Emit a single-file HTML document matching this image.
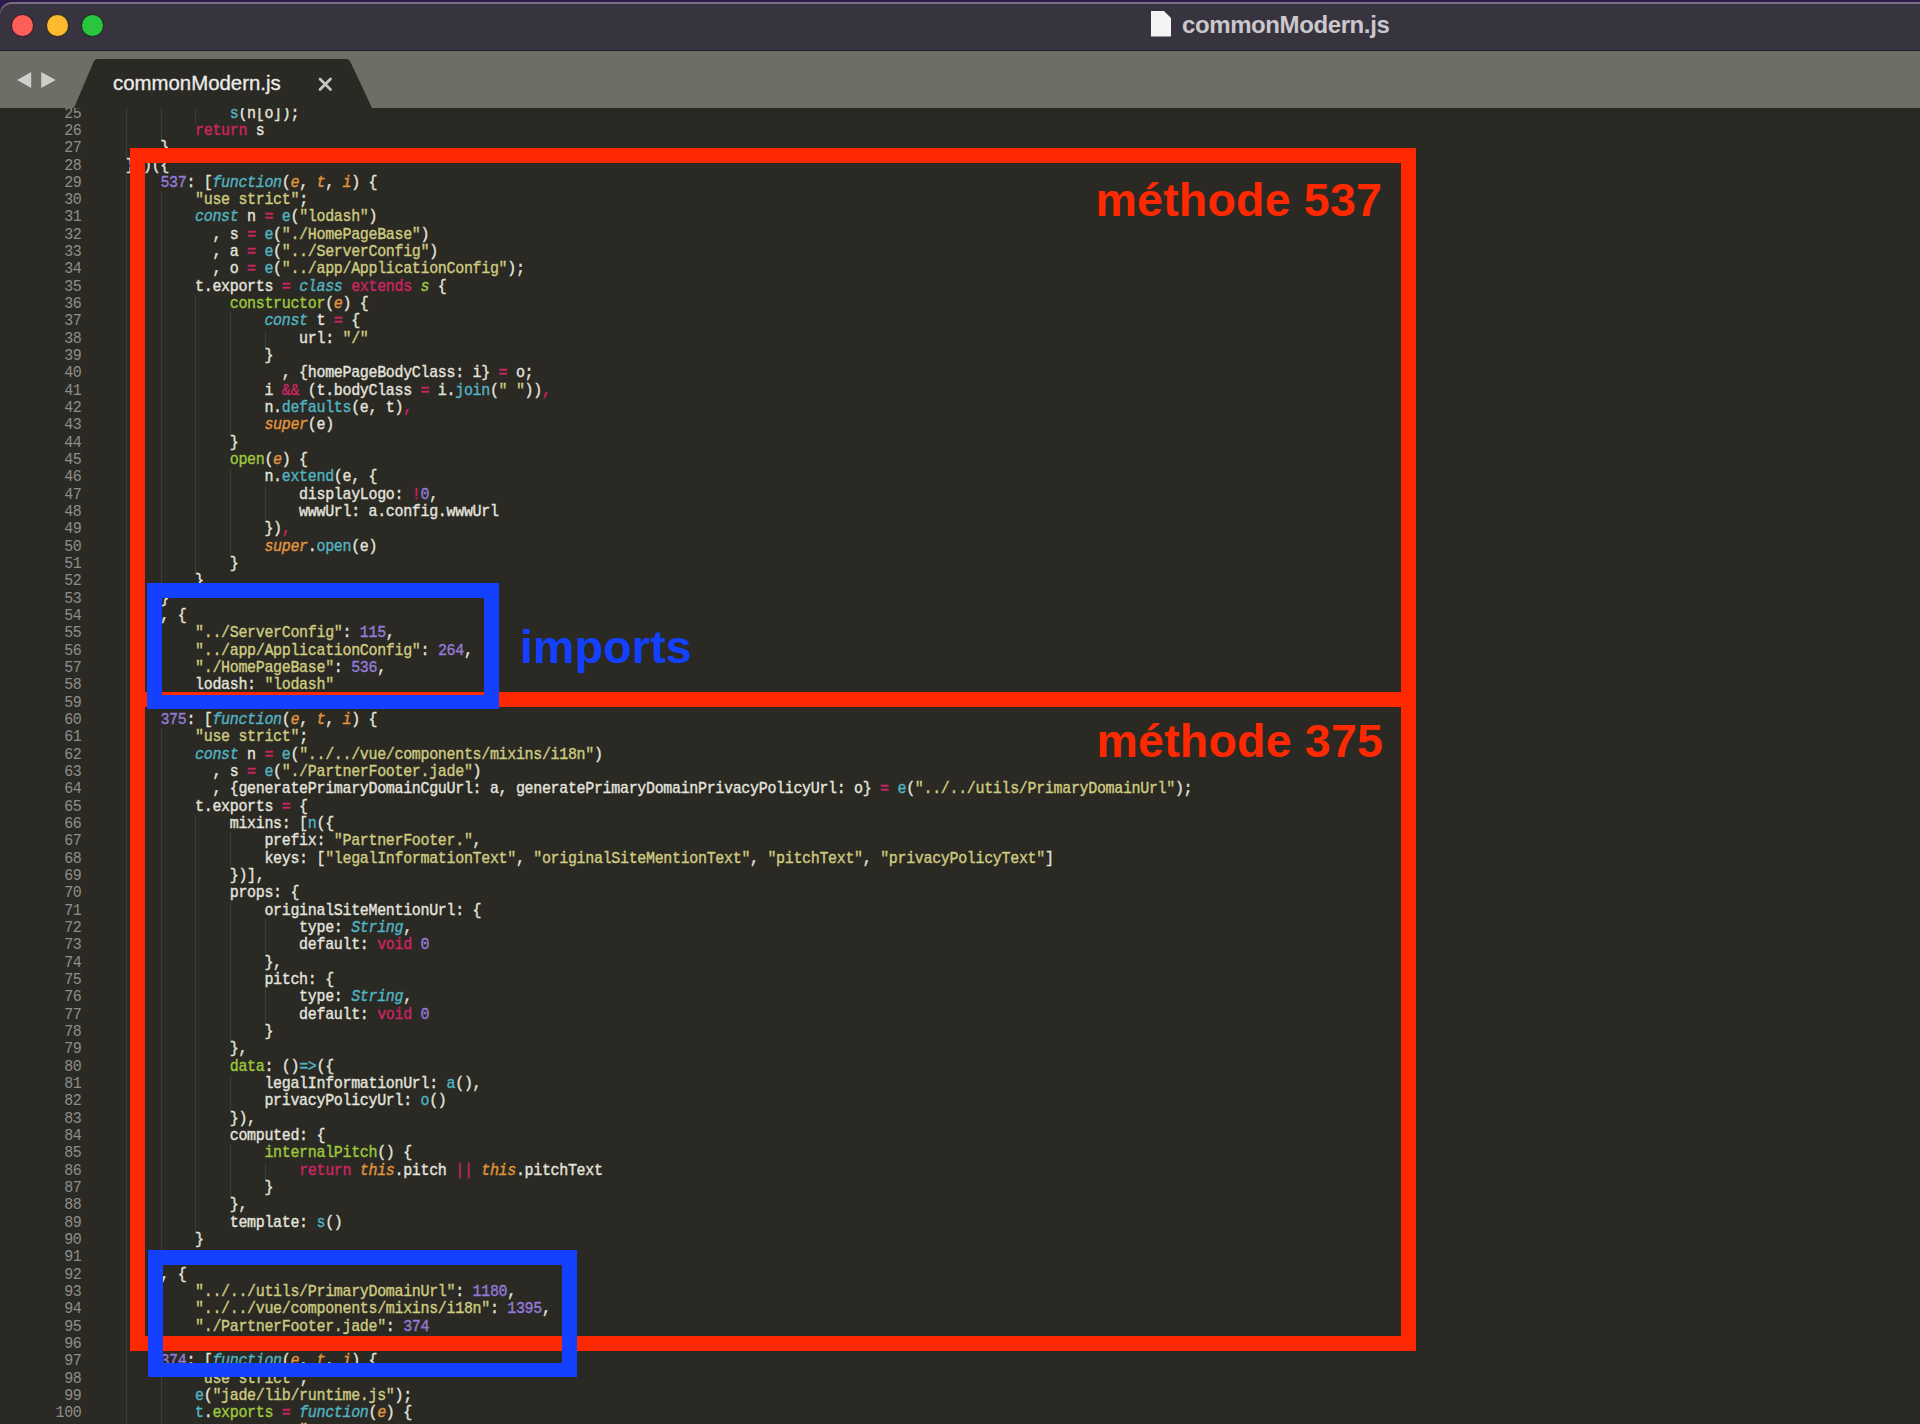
<!DOCTYPE html>
<html>
<head>
<meta charset="utf-8">
<style>
html,body{margin:0;padding:0}
body{width:1920px;height:1424px;overflow:hidden;position:relative;background:#2a2924;font-family:"Liberation Sans",sans-serif}
.abs{position:absolute}
#outer{left:0;top:0;width:1920px;height:40px;background:#2a1b4a}
#titlebar{left:0;top:2px;width:1920px;height:48px;background:#37333f;border-top-left-radius:12px;box-shadow:inset 0 2px 0 #7b6d82}
#tline{left:0;top:50px;width:1920px;height:1px;background:#211e25}
#tabbar{left:0;top:51px;width:1920px;height:57px;background:#6e6d66}
#editor{left:0;top:108px;width:1920px;height:1316px;background:#2a2924}
#title{left:1182px;top:0;font-weight:bold;font-size:24px;letter-spacing:-0.4px;color:#cac8cc;line-height:1}
#tabtext{left:113px;top:0;font-size:20.4px;color:#ececea;line-height:1;-webkit-text-stroke:0.3px #ececea}
.dot{width:21px;height:21px;border-radius:50%;top:14.5px}
#code{left:0;top:0;width:1920px;height:1424px;overflow:hidden;z-index:1}
.ln{position:absolute;left:125.7px;height:17.33px;line-height:17.33px;white-space:pre;font-family:"Liberation Mono",monospace;font-size:15px;letter-spacing:-0.330px;color:#e4e4df;-webkit-text-stroke:0.35px currentColor;
background-image:repeating-linear-gradient(to right,#3d3d37 0,#3d3d37 1px,transparent 1px,transparent 34.68px);background-repeat:no-repeat;transform:scaleY(1.08)}
.nm{position:absolute;left:20px;width:61.5px;text-align:right;height:17.33px;line-height:17.33px;font-family:"Liberation Mono",monospace;font-size:15px;letter-spacing:-0.330px;color:#8e8e88;transform:scaleY(1.08)}
i{font-style:normal}
i.k{color:#cc2462}
i.s{color:#cfcb80}
i.n{color:#947ad6}
i.f{color:#52b3c2}
i.t{color:#52b3c2;font-style:italic}
i.g{color:#9dc83c}
i.gi{color:#9dc83c;font-style:italic}
i.p{color:#e0963c;font-style:italic}
#ui{left:0;top:0;width:1920px;height:108px;z-index:2}
#ann{left:0;top:0;width:1920px;height:1424px;z-index:3}
.lbl{font-weight:bold;font-size:46.5px;letter-spacing:0.2px;line-height:1;white-space:nowrap}
</style>
</head>
<body>
<div id="code" class="abs">
<div class="nm" style="top:105.50px">25</div>
<div class="nm" style="top:122.84px">26</div>
<div class="nm" style="top:140.16px">27</div>
<div class="nm" style="top:157.50px">28</div>
<div class="nm" style="top:174.83px">29</div>
<div class="nm" style="top:192.16px">30</div>
<div class="nm" style="top:209.48px">31</div>
<div class="nm" style="top:226.81px">32</div>
<div class="nm" style="top:244.15px">33</div>
<div class="nm" style="top:261.47px">34</div>
<div class="nm" style="top:278.80px">35</div>
<div class="nm" style="top:296.13px">36</div>
<div class="nm" style="top:313.46px">37</div>
<div class="nm" style="top:330.79px">38</div>
<div class="nm" style="top:348.12px">39</div>
<div class="nm" style="top:365.45px">40</div>
<div class="nm" style="top:382.78px">41</div>
<div class="nm" style="top:400.11px">42</div>
<div class="nm" style="top:417.44px">43</div>
<div class="nm" style="top:434.77px">44</div>
<div class="nm" style="top:452.10px">45</div>
<div class="nm" style="top:469.43px">46</div>
<div class="nm" style="top:486.76px">47</div>
<div class="nm" style="top:504.09px">48</div>
<div class="nm" style="top:521.42px">49</div>
<div class="nm" style="top:538.75px">50</div>
<div class="nm" style="top:556.09px">51</div>
<div class="nm" style="top:573.41px">52</div>
<div class="nm" style="top:590.75px">53</div>
<div class="nm" style="top:608.08px">54</div>
<div class="nm" style="top:625.40px">55</div>
<div class="nm" style="top:642.74px">56</div>
<div class="nm" style="top:660.06px">57</div>
<div class="nm" style="top:677.39px">58</div>
<div class="nm" style="top:694.73px">59</div>
<div class="nm" style="top:712.05px">60</div>
<div class="nm" style="top:729.38px">61</div>
<div class="nm" style="top:746.71px">62</div>
<div class="nm" style="top:764.04px">63</div>
<div class="nm" style="top:781.38px">64</div>
<div class="nm" style="top:798.70px">65</div>
<div class="nm" style="top:816.03px">66</div>
<div class="nm" style="top:833.37px">67</div>
<div class="nm" style="top:850.69px">68</div>
<div class="nm" style="top:868.02px">69</div>
<div class="nm" style="top:885.36px">70</div>
<div class="nm" style="top:902.68px">71</div>
<div class="nm" style="top:920.01px">72</div>
<div class="nm" style="top:937.34px">73</div>
<div class="nm" style="top:954.67px">74</div>
<div class="nm" style="top:972.00px">75</div>
<div class="nm" style="top:989.33px">76</div>
<div class="nm" style="top:1006.66px">77</div>
<div class="nm" style="top:1023.99px">78</div>
<div class="nm" style="top:1041.32px">79</div>
<div class="nm" style="top:1058.65px">80</div>
<div class="nm" style="top:1075.98px">81</div>
<div class="nm" style="top:1093.32px">82</div>
<div class="nm" style="top:1110.64px">83</div>
<div class="nm" style="top:1127.97px">84</div>
<div class="nm" style="top:1145.30px">85</div>
<div class="nm" style="top:1162.63px">86</div>
<div class="nm" style="top:1179.96px">87</div>
<div class="nm" style="top:1197.29px">88</div>
<div class="nm" style="top:1214.62px">89</div>
<div class="nm" style="top:1231.95px">90</div>
<div class="nm" style="top:1249.28px">91</div>
<div class="nm" style="top:1266.62px">92</div>
<div class="nm" style="top:1283.94px">93</div>
<div class="nm" style="top:1301.27px">94</div>
<div class="nm" style="top:1318.61px">95</div>
<div class="nm" style="top:1335.93px">96</div>
<div class="nm" style="top:1353.26px">97</div>
<div class="nm" style="top:1370.59px">98</div>
<div class="nm" style="top:1387.92px">99</div>
<div class="nm" style="top:1405.25px">100</div>
<div class="ln" style="top:105.50px;background-size:104.04px 100%">            <i class="f">s</i>(n[o]);</div>
<div class="ln" style="top:122.84px;background-size:69.36px 100%">        <i class="k">return</i> s</div>
<div class="ln" style="top:140.16px;background-size:34.68px 100%">    }</div>
<div class="ln" style="top:157.50px;background:none">}()({</div>
<div class="ln" style="top:174.83px;background-size:34.68px 100%">    <i class="n">537</i>: [<i class="t">function</i>(<i class="p">e</i>, <i class="p">t</i>, <i class="p">i</i>) {</div>
<div class="ln" style="top:192.16px;background-size:69.36px 100%">        <i class="s">"use strict"</i>;</div>
<div class="ln" style="top:209.48px;background-size:69.36px 100%">        <i class="t">const</i> n <i class="k">=</i> <i class="f">e</i>(<i class="s">"lodash"</i>)</div>
<div class="ln" style="top:226.81px;background-size:69.36px 100%">          , s <i class="k">=</i> <i class="f">e</i>(<i class="s">"./HomePageBase"</i>)</div>
<div class="ln" style="top:244.15px;background-size:69.36px 100%">          , a <i class="k">=</i> <i class="f">e</i>(<i class="s">"../ServerConfig"</i>)</div>
<div class="ln" style="top:261.47px;background-size:69.36px 100%">          , o <i class="k">=</i> <i class="f">e</i>(<i class="s">"../app/ApplicationConfig"</i>);</div>
<div class="ln" style="top:278.80px;background-size:69.36px 100%">        t.exports <i class="k">=</i> <i class="t">class</i> <i class="k">extends</i> <i class="gi">s</i> {</div>
<div class="ln" style="top:296.13px;background-size:104.04px 100%">            <i class="g">constructor</i>(<i class="p">e</i>) {</div>
<div class="ln" style="top:313.46px;background-size:138.72px 100%">                <i class="t">const</i> t <i class="k">=</i> {</div>
<div class="ln" style="top:330.79px;background-size:173.40px 100%">                    url: <i class="s">"/"</i></div>
<div class="ln" style="top:348.12px;background-size:138.72px 100%">                }</div>
<div class="ln" style="top:365.45px;background-size:138.72px 100%">                  , {homePageBodyClass: i} <i class="k">=</i> o;</div>
<div class="ln" style="top:382.78px;background-size:138.72px 100%">                i <i class="k">&amp;&amp;</i> (t.bodyClass <i class="k">=</i> i.<i class="f">join</i>(<i class="s">" "</i>))<i class="k">,</i></div>
<div class="ln" style="top:400.11px;background-size:138.72px 100%">                n.<i class="f">defaults</i>(e, t)<i class="k">,</i></div>
<div class="ln" style="top:417.44px;background-size:138.72px 100%">                <i class="p">super</i>(e)</div>
<div class="ln" style="top:434.77px;background-size:104.04px 100%">            }</div>
<div class="ln" style="top:452.10px;background-size:104.04px 100%">            <i class="g">open</i>(<i class="p">e</i>) {</div>
<div class="ln" style="top:469.43px;background-size:138.72px 100%">                n.<i class="f">extend</i>(e, {</div>
<div class="ln" style="top:486.76px;background-size:173.40px 100%">                    displayLogo: <i class="k">!</i><i class="n">0</i>,</div>
<div class="ln" style="top:504.09px;background-size:173.40px 100%">                    wwwUrl: a.config.wwwUrl</div>
<div class="ln" style="top:521.42px;background-size:138.72px 100%">                })<i class="k">,</i></div>
<div class="ln" style="top:538.75px;background-size:138.72px 100%">                <i class="p">super</i>.<i class="f">open</i>(e)</div>
<div class="ln" style="top:556.09px;background-size:104.04px 100%">            }</div>
<div class="ln" style="top:573.41px;background-size:69.36px 100%">        }</div>
<div class="ln" style="top:590.75px;background-size:34.68px 100%">    }</div>
<div class="ln" style="top:608.08px;background-size:34.68px 100%">    , {</div>
<div class="ln" style="top:625.40px;background-size:69.36px 100%">        <i class="s">"../ServerConfig"</i>: <i class="n">115</i>,</div>
<div class="ln" style="top:642.74px;background-size:69.36px 100%">        <i class="s">"../app/ApplicationConfig"</i>: <i class="n">264</i>,</div>
<div class="ln" style="top:660.06px;background-size:69.36px 100%">        <i class="s">"./HomePageBase"</i>: <i class="n">536</i>,</div>
<div class="ln" style="top:677.39px;background-size:69.36px 100%">        lodash: <i class="s">"lodash"</i></div>
<div class="ln" style="top:694.73px;background-size:34.68px 100%">    </div>
<div class="ln" style="top:712.05px;background-size:34.68px 100%">    <i class="n">375</i>: [<i class="t">function</i>(<i class="p">e</i>, <i class="p">t</i>, <i class="p">i</i>) {</div>
<div class="ln" style="top:729.38px;background-size:69.36px 100%">        <i class="s">"use strict"</i>;</div>
<div class="ln" style="top:746.71px;background-size:69.36px 100%">        <i class="t">const</i> n <i class="k">=</i> <i class="f">e</i>(<i class="s">"../../vue/components/mixins/i18n"</i>)</div>
<div class="ln" style="top:764.04px;background-size:69.36px 100%">          , s <i class="k">=</i> <i class="f">e</i>(<i class="s">"./PartnerFooter.jade"</i>)</div>
<div class="ln" style="top:781.38px;background-size:69.36px 100%">          , {generatePrimaryDomainCguUrl: a, generatePrimaryDomainPrivacyPolicyUrl: o} <i class="k">=</i> <i class="f">e</i>(<i class="s">"../../utils/PrimaryDomainUrl"</i>);</div>
<div class="ln" style="top:798.70px;background-size:69.36px 100%">        t.exports <i class="k">=</i> {</div>
<div class="ln" style="top:816.03px;background-size:104.04px 100%">            mixins: [<i class="f">n</i>({</div>
<div class="ln" style="top:833.37px;background-size:138.72px 100%">                prefix: <i class="s">"PartnerFooter."</i>,</div>
<div class="ln" style="top:850.69px;background-size:138.72px 100%">                keys: [<i class="s">"legalInformationText"</i>, <i class="s">"originalSiteMentionText"</i>, <i class="s">"pitchText"</i>, <i class="s">"privacyPolicyText"</i>]</div>
<div class="ln" style="top:868.02px;background-size:104.04px 100%">            })],</div>
<div class="ln" style="top:885.36px;background-size:104.04px 100%">            props: {</div>
<div class="ln" style="top:902.68px;background-size:138.72px 100%">                originalSiteMentionUrl: {</div>
<div class="ln" style="top:920.01px;background-size:173.40px 100%">                    type: <i class="t">String</i>,</div>
<div class="ln" style="top:937.34px;background-size:173.40px 100%">                    default: <i class="k">void</i> <i class="n">0</i></div>
<div class="ln" style="top:954.67px;background-size:138.72px 100%">                },</div>
<div class="ln" style="top:972.00px;background-size:138.72px 100%">                pitch: {</div>
<div class="ln" style="top:989.33px;background-size:173.40px 100%">                    type: <i class="t">String</i>,</div>
<div class="ln" style="top:1006.66px;background-size:173.40px 100%">                    default: <i class="k">void</i> <i class="n">0</i></div>
<div class="ln" style="top:1023.99px;background-size:138.72px 100%">                }</div>
<div class="ln" style="top:1041.32px;background-size:104.04px 100%">            },</div>
<div class="ln" style="top:1058.65px;background-size:104.04px 100%">            <i class="g">data</i>: ()<i class="f">=&gt;</i>({</div>
<div class="ln" style="top:1075.98px;background-size:138.72px 100%">                legalInformationUrl: <i class="f">a</i>(),</div>
<div class="ln" style="top:1093.32px;background-size:138.72px 100%">                privacyPolicyUrl: <i class="f">o</i>()</div>
<div class="ln" style="top:1110.64px;background-size:104.04px 100%">            }),</div>
<div class="ln" style="top:1127.97px;background-size:104.04px 100%">            computed: {</div>
<div class="ln" style="top:1145.30px;background-size:138.72px 100%">                <i class="g">internalPitch</i>() {</div>
<div class="ln" style="top:1162.63px;background-size:173.40px 100%">                    <i class="k">return</i> <i class="p">this</i>.pitch <i class="k">||</i> <i class="p">this</i>.pitchText</div>
<div class="ln" style="top:1179.96px;background-size:138.72px 100%">                }</div>
<div class="ln" style="top:1197.29px;background-size:104.04px 100%">            },</div>
<div class="ln" style="top:1214.62px;background-size:104.04px 100%">            template: <i class="f">s</i>()</div>
<div class="ln" style="top:1231.95px;background-size:69.36px 100%">        }</div>
<div class="ln" style="top:1249.28px;background-size:34.68px 100%">    </div>
<div class="ln" style="top:1266.62px;background-size:34.68px 100%">    , {</div>
<div class="ln" style="top:1283.94px;background-size:69.36px 100%">        <i class="s">"../../utils/PrimaryDomainUrl"</i>: <i class="n">1180</i>,</div>
<div class="ln" style="top:1301.27px;background-size:69.36px 100%">        <i class="s">"../../vue/components/mixins/i18n"</i>: <i class="n">1395</i>,</div>
<div class="ln" style="top:1318.61px;background-size:69.36px 100%">        <i class="s">"./PartnerFooter.jade"</i>: <i class="n">374</i></div>
<div class="ln" style="top:1335.93px;background-size:34.68px 100%">    </div>
<div class="ln" style="top:1353.26px;background-size:34.68px 100%">    <i class="n">374</i>: [<i class="t">function</i>(<i class="p">e</i>, <i class="p">t</i>, <i class="p">i</i>) {</div>
<div class="ln" style="top:1370.59px;background-size:69.36px 100%">        <i class="s">"use strict"</i>;</div>
<div class="ln" style="top:1387.92px;background-size:69.36px 100%">        <i class="f">e</i>(<i class="s">"jade/lib/runtime.js"</i>);</div>
<div class="ln" style="top:1405.25px;background-size:69.36px 100%">        <i class="f">t</i>.<i class="g">exports</i> <i class="k">=</i> <i class="t">function</i>(<i class="p">e</i>) {</div>
<div class="ln" style="top:1422.58px;background-size:173.40px 100%">                    <i class="s">"</i></div>
</div>
<div id="ui" class="abs">
<div id="outer" class="abs"></div>
<div id="titlebar" class="abs"></div>
<div id="tline" class="abs"></div>
<div id="tabbar" class="abs"></div>
<div class="abs dot" style="left:11.5px;background:#fd5e57;box-shadow:0 0 0 1px #3b2230"></div>
<div class="abs dot" style="left:46.5px;background:#fcbb2e;box-shadow:0 0 0 1px #3d3020"></div>
<div class="abs dot" style="left:81.5px;background:#2ac53f;box-shadow:0 0 0 1px #1f3322"></div>
<svg class="abs" style="left:0;top:0" width="1920" height="108">
<polygon points="17.2,80 31.2,72 31.2,88" fill="#cfcfcb"/>
<polygon points="41.2,72 55.7,80 41.2,88" fill="#cfcfcb"/>
<path d="M74,108 L93.5,62 Q95,59 98,59 L346,59 Q349,59 350.5,62 L372,108 Z" fill="#2a2924"/>
<path d="M320,79 L330.5,89.5 M330.5,79 L320,89.5" stroke="#c4c4c0" stroke-width="2.8" stroke-linecap="round"/>
<path d="M1151,11 L1164,11 L1171,18 L1171,36.5 L1151,36.5 Z" fill="#f4f4f4"/>
</svg>
<div id="title" class="abs" style="top:12.5px">commonModern.js</div>
<div id="tabtext" class="abs" style="top:72.9px">commonModern.js</div>
</div>
<div id="ann" class="abs">
<div class="abs" style="left:129.5px;top:148px;width:1256px;height:1172.5px;border:15px solid #fe2900"></div>
<div class="abs" style="left:129.5px;top:692px;width:1286px;height:15px;background:#fe2900"></div>
<div class="abs" style="left:147px;top:583px;width:322px;height:96px;border:15px solid #1440ff;border-bottom-width:14px;height:97px"></div>
<div class="abs" style="left:147.5px;top:1249.5px;width:399px;height:98px;border:15px solid #1440ff;border-bottom-width:14px"></div>
<div class="abs lbl" style="right:538px;top:177.1px;color:#fe2900">méthode 537</div>
<div class="abs lbl" style="right:537px;top:717.6px;color:#fe2900">méthode 375</div>
<div class="abs lbl" style="left:520px;top:623.6px;color:#1440ff">imports</div>
</div>
</body>
</html>
